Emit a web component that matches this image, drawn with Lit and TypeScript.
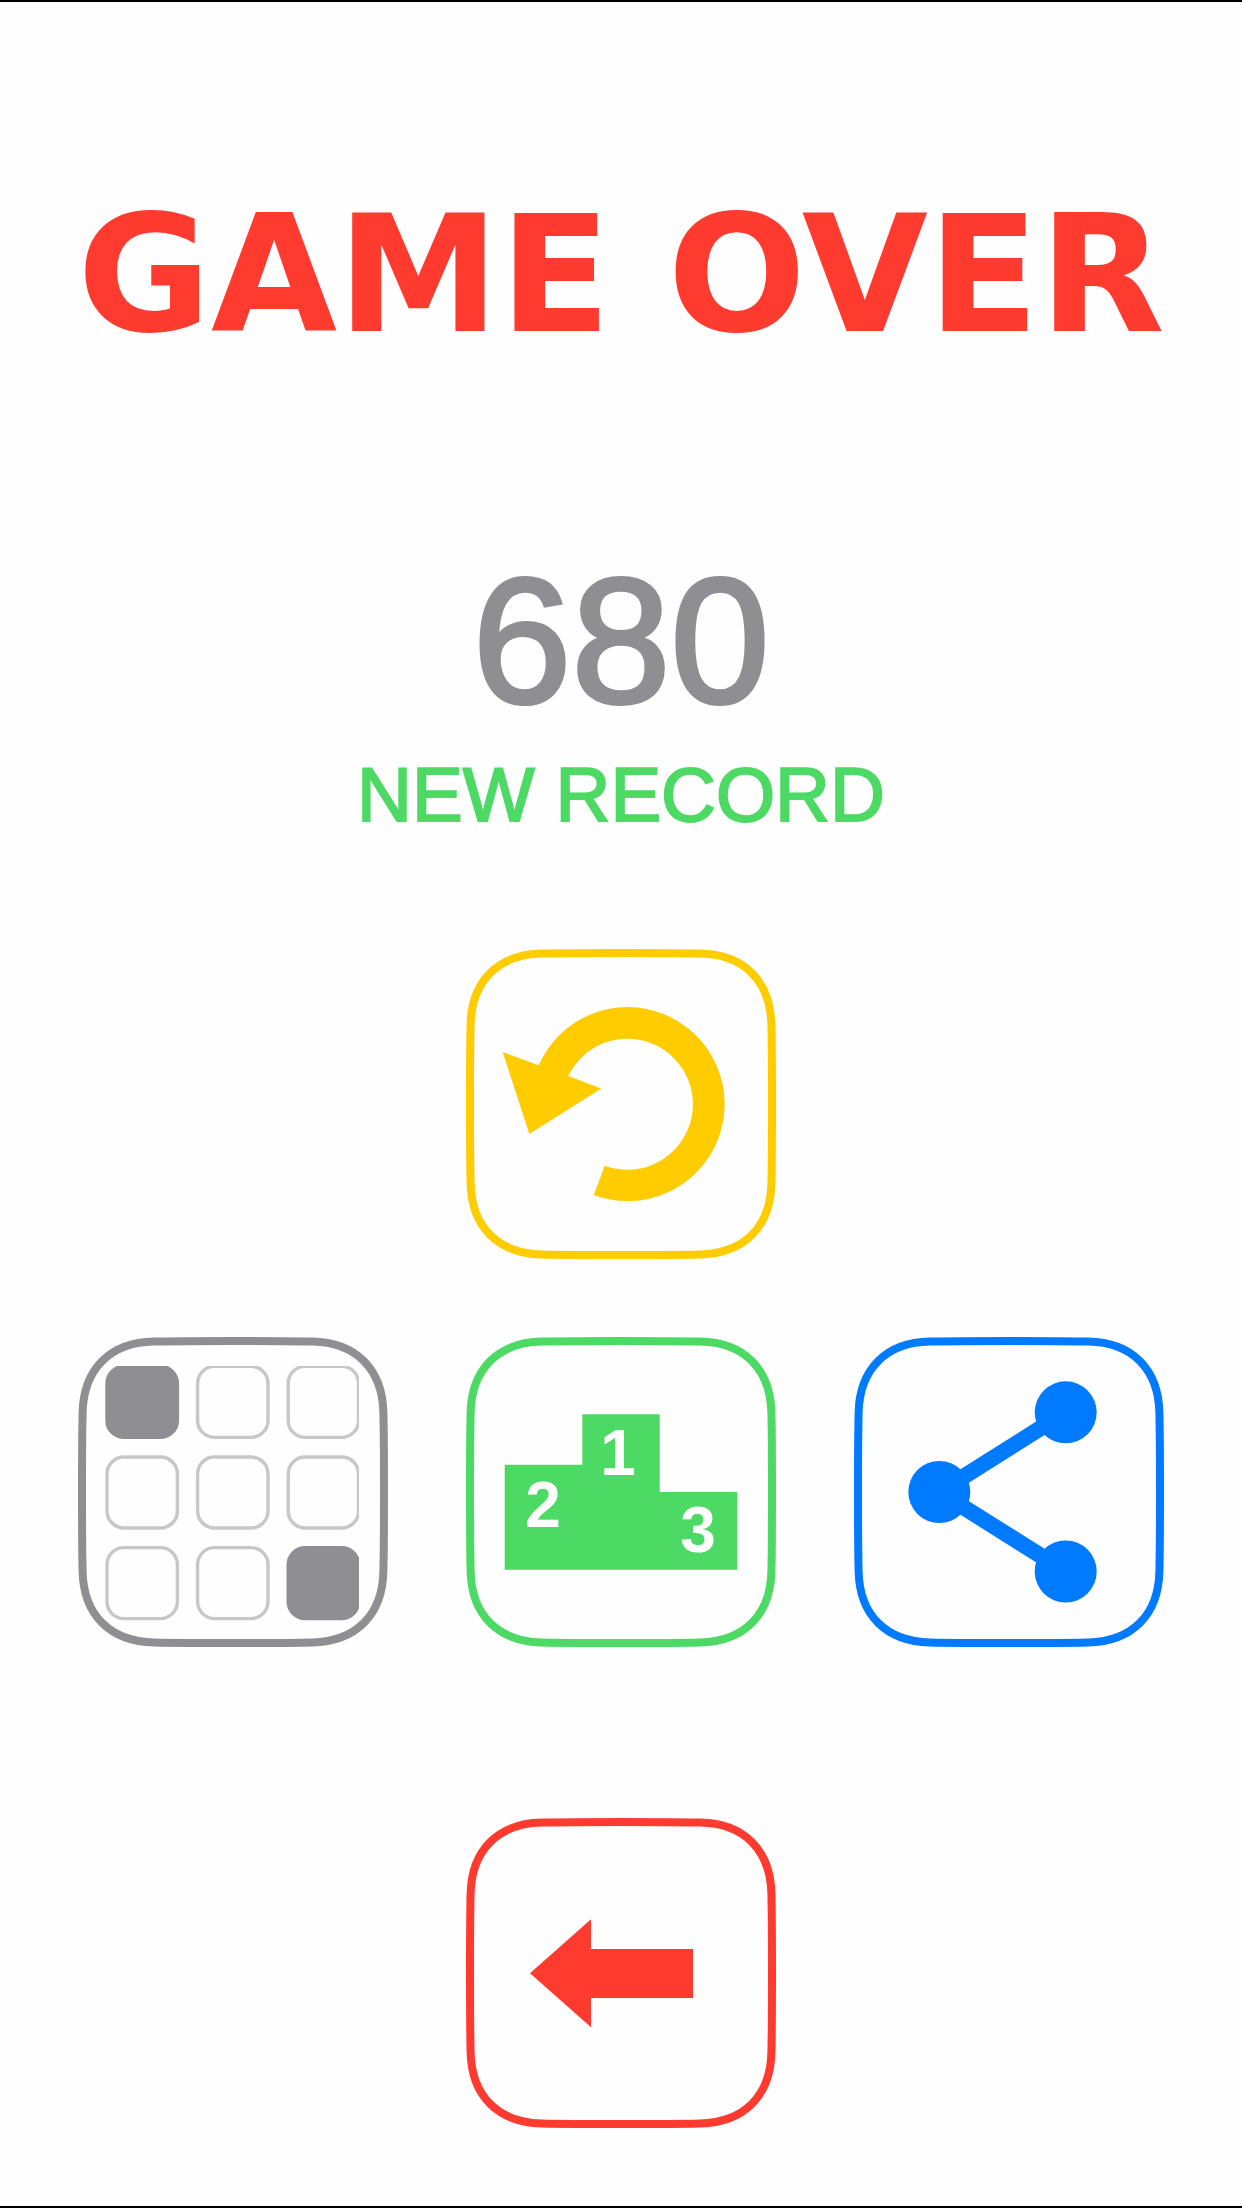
import { LitElement, html, svg, css } from "lit";
import { customElement, property } from "lit/decorators.js";

const icons = {
  replay: svg`<path fill="currentColor" d="M36.7 103 L72.7 116.3 A97 97 0 1 1 127.7 246 L138.7 216.7 A65.5 65.5 0 1 0 102.3 127 L135.3 139.6 L63.3 185 Z"/>`,
  board: svg`
    <clipPath id="board-clip"><rect x="20" y="29" width="261" height="260"/></clipPath>
    <g clip-path="url(#board-clip)">
      ${[0, 1, 2].flatMap((row) =>
        [0, 1, 2].map((col) => {
          const filled = row === col && row !== 1;
          return svg`<rect class=${filled ? "cell filled" : "cell"}
            x=${29 + col * 90.6} y=${29.4 + row * 90.6} width="70.4" height="71" rx="17"/>`;
        })
      )}
    </g>`,
  podium: svg`
    <path fill="currentColor" d="M38.7 127.7 H116.3 V77.3 H193.7 V155 H271.3 V232.7 H38.7 Z"/>
    <g class="rank">
      <text x="152" y="137.7">1</text>
      <text x="77" y="190">2</text>
      <text x="232" y="215.3">3</text>
    </g>`,
  share: svg`
    <path fill="none" stroke="currentColor" stroke-width="16" d="M211.7 75.3 L85.3 155 L211.7 234.5"/>
    <circle fill="currentColor" cx="211.7" cy="75.3" r="31"/>
    <circle fill="currentColor" cx="85.3" cy="155" r="31"/>
    <circle fill="currentColor" cx="211.7" cy="234.5" r="31"/>`,
  back: svg`<path fill="currentColor" d="M64 155.3 L125 101.3 V131 H227 V180 H125 V209.3 Z"/>`,
};

type IconName = keyof typeof icons;

@customElement("tile-button")
export class TileButton extends LitElement {
  @property() icon: IconName = "replay";
  @property() label = "";

  static styles = css`
    :host {
      display: block;
    }
    .tile {
      display: block;
      width: 100%;
      margin: 0;
      padding: 0;
      border: 0;
      background: none;
      color: inherit;
      cursor: pointer;
    }
    .art {
      display: block;
      width: 100%;
      height: auto;
    }
    .frame {
      fill: none;
      stroke: currentColor;
      stroke-width: 8;
    }
    .cell {
      fill: none;
      stroke: #c7c7c9;
      stroke-width: 3.4;
    }
    .cell.filled {
      fill: currentColor;
      stroke: currentColor;
    }
    .rank {
      fill: #fefefe;
      font: bold 64px "Liberation Sans", Arial, sans-serif;
      text-anchor: middle;
    }
  `;

  render() {
    return html`
      <button class="tile" type="button" aria-label=${this.label}>
        <svg class="art" viewBox="0 0 310 310" aria-hidden="true">
          <path class="frame" d="M155 4 C120 4 98 4.1 76 4.6 C32 5.4 5.4 32 4.6 76 C4.1 98 4 120 4 155
            C4 190 4.1 212 4.6 234 C5.4 278 32 304.6 76 305.4 C98 305.9 120 306 155 306
            C190 306 212 305.9 234 305.4 C278 304.6 304.6 278 305.4 234 C305.9 212 306 190 306 155
            C306 120 305.9 98 305.4 76 C304.6 32 278 5.4 234 4.6 C212 4.1 190 4 155 4 Z"/>
          ${icons[this.icon]}
        </svg>
      </button>
    `;
  }
}

@customElement("app-root")
export class AppRoot extends LitElement {
  static styles = css`
    :host {
      display: block;
    }
    .screen {
      box-sizing: border-box;
      min-height: 100vh;
      padding: 191px 0 78px;
      border-top: 2px solid #000;
      border-bottom: 2px solid #000;
      background: #fefefe;
      font-family: "Liberation Sans", Arial, sans-serif;
      text-align: center;
    }
    .title {
      margin: 0;
      color: #ff3b30;
      font: bold 163px/1 "DejaVu Sans", Verdana, sans-serif;
      white-space: nowrap;
    }
    .score,
    .record {
      margin: 0;
      line-height: 1;
    }
    .score {
      margin-top: 196px;
      color: #8e8e93;
      font-size: 178px;
      -webkit-text-stroke: 4px currentColor;
    }
    .record {
      margin-top: 27px;
      color: #4cd964;
      font-size: 76px;
      -webkit-text-stroke: 2px currentColor;
    }
    .actions {
      display: grid;
      grid-template-columns: repeat(3, 1fr);
      gap: 78px;
      margin-top: 116px;
      padding: 0 78px;
    }
    .middle {
      grid-column: 2;
    }
    .first {
      grid-column: 1;
    }
    .back {
      margin-top: 93px;
    }
    .yellow {
      color: #ffcc00;
    }
    .gray {
      color: #8e8e93;
    }
    .green {
      color: #4cd964;
    }
    .blue {
      color: #007aff;
    }
    .red {
      color: #ff3b30;
    }
  `;

  render() {
    return html`
      <main class="screen">
        <h1 class="title">GAME OVER</h1>
        <p class="score">680</p>
        <p class="record">NEW RECORD</p>
        <nav class="actions">
          <tile-button class="middle yellow" icon="replay" label="Play again"></tile-button>
          <tile-button class="first gray" icon="board" label="Board"></tile-button>
          <tile-button class="green" icon="podium" label="Leaderboard"></tile-button>
          <tile-button class="blue" icon="share" label="Share"></tile-button>
          <tile-button class="middle back red" icon="back" label="Back"></tile-button>
        </nav>
      </main>
    `;
  }
}
